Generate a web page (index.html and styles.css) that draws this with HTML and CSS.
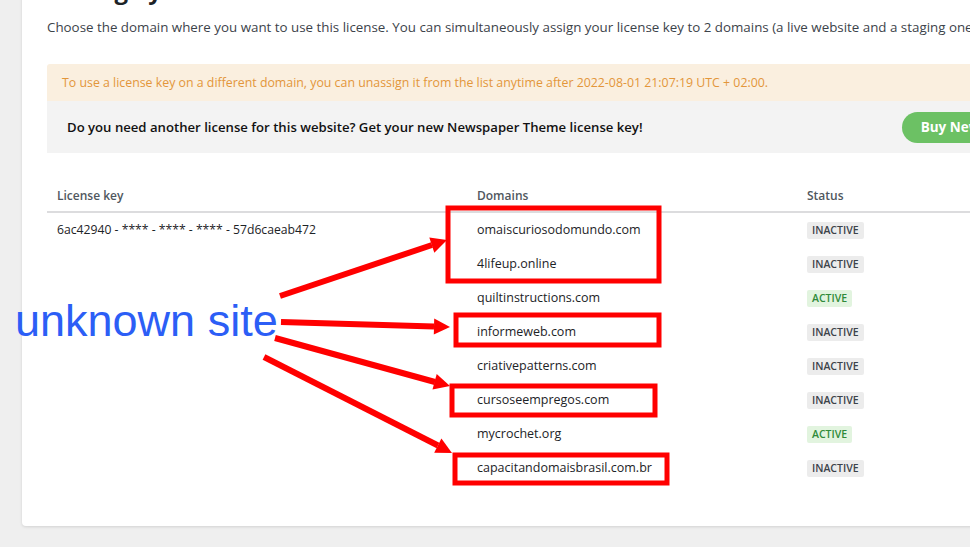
FILE: index.html
```html
<!DOCTYPE html>
<html>
<head>
<meta charset="utf-8">
<link rel="stylesheet" href="styles.css">
</head>
<body>
<div class="page">
  <div class="card">
    <h1 class="title">Manage your license</h1>
    <p class="intro">Choose the domain where you want to use this license. You can simultaneously assign your license key to 2 domains (a live website and a staging one).</p>
    <div class="notice">To use a license key on a different domain, you can unassign it from the list anytime after 2022-08-01 21:07:19 UTC + 02:00.</div>
    <div class="promo">
      <span class="promo-text">Do you need another license for this website? Get your new Newspaper Theme license key!</span>
      <a class="btn-buy">Buy New License</a>
    </div>
    <table class="licenses">
      <thead>
        <tr><th class="c-key">License key</th><th class="c-dom">Domains</th><th class="c-st">Status</th></tr>
      </thead>
      <tbody>
        <tr><td class="c-key" rowspan="8">6ac42940 - **** - **** - **** - 57d6caeab472</td><td>omaiscuriosodomundo.com</td><td><span class="badge">Inactive</span></td></tr>
        <tr><td>4lifeup.online</td><td><span class="badge">Inactive</span></td></tr>
        <tr><td>quiltinstructions.com</td><td><span class="badge active">Active</span></td></tr>
        <tr><td>informeweb.com</td><td><span class="badge">Inactive</span></td></tr>
        <tr><td>criativepatterns.com</td><td><span class="badge">Inactive</span></td></tr>
        <tr><td>cursoseempregos.com</td><td><span class="badge">Inactive</span></td></tr>
        <tr><td>mycrochet.org</td><td><span class="badge active">Active</span></td></tr>
        <tr><td>capacitandomaisbrasil.com.br</td><td><span class="badge">Inactive</span></td></tr>
      </tbody>
    </table>
  </div>
</div>
<svg class="annot" width="970" height="547" viewBox="0 0 970 547">
  <g fill="none" stroke="#ff0000" stroke-width="5">
    <rect x="448" y="208" width="211" height="73"/>
    <rect x="456" y="315" width="203" height="30"/>
    <rect x="452" y="386" width="203" height="29"/>
    <rect x="455" y="455" width="212" height="28"/>
  </g>
  <g stroke="#ff0000" stroke-width="6" stroke-linecap="butt">
    <line x1="280" y1="296" x2="432" y2="245"/>
    <line x1="281" y1="322" x2="434" y2="326.5"/>
    <line x1="275" y1="338" x2="435" y2="382"/>
    <line x1="264" y1="357" x2="438" y2="445.5"/>
  </g>
  <g fill="#ff0000">
    <polygon points="447,240 434.3,252.7 429.3,237.5"/>
    <polygon points="450,327 433.8,334.5 434.2,318.5"/>
    <polygon points="450,386 432.5,389.5 436.7,374.1"/>
    <polygon points="452,453 434.2,452.8 441.4,438.6"/>
  </g>
  <text class="annot-label" x="15" y="336">unknown site</text>
</svg>
</body>
</html>
```
FILE: styles.css
```css
html, body {
  margin: 0;
  padding: 0;
}
body {
  background: #efefef;
  width: 970px;
  height: 547px;
  overflow: hidden;
  position: relative;
  font-family: "Open Sans", "Noto Sans", sans-serif;
  color: #3c434a;
}
.page {
  padding-left: 22px;
}
.card {
  box-sizing: border-box;
  width: 1076px;
  height: 553px;
  margin-top: -27px;
  padding: 0 25px;
  background: #fff;
  border-radius: 4px;
  box-shadow: 0 1px 3px rgba(0,0,0,0.12);
}
.title {
  margin: 0;
  height: 34px;
  font-size: 24px;
  line-height: 34px;
  font-weight: 700;
  color: #1d2327;
}
.intro {
  margin: 10px 0 0;
  font-size: 13.35px;
  line-height: 20px;
  color: #3c434a;
  white-space: nowrap;
}
.notice {
  margin-top: 27px;
  height: 37px;
  line-height: 37px;
  padding: 0 15px;
  background: #faefdf;
  color: #e3963a;
  font-size: 12.35px;
  border-radius: 3px 3px 0 0;
  white-space: nowrap;
}
.promo {
  display: flex;
  align-items: center;
  height: 52px;
  padding: 0 20px;
  background: #f3f3f3;
}
.promo-text {
  font-size: 13.15px;
  font-weight: 600;
  color: #111;
  white-space: nowrap;
}
.btn-buy {
  margin-left: auto;
  height: 31px;
  line-height: 31px;
  padding: 0 19px;
  background: #6cc164;
  color: #fff;
  font-size: 13.5px;
  font-weight: 700;
  border-radius: 16px;
  white-space: nowrap;
}
.licenses {
  margin-top: 32px;
  width: 100%;
  border-collapse: collapse;
  font-size: 12.5px;
}
.licenses th {
  text-align: left;
  font-weight: 600;
  font-size: 12px;
  color: #50575e;
  height: 24px;
  vertical-align: top;
  padding: 2px 10px 0;
  border-bottom: 2px solid #dcdcde;
  line-height: 18px;
}
.licenses td {
  height: 34px;
  padding: 0 10px;
  vertical-align: middle;
  color: #1d2327;
  line-height: 18px;
}
.licenses td.c-key {
  vertical-align: top;
  padding-top: 8px;
  font-size: 12.2px;
}
.c-key { width: 400px; }
.c-dom { width: 310px; }
.badge {
  display: inline-block;
  height: 17px;
  line-height: 17px;
  padding: 0 5px;
  background: #ececec;
  color: #3c434a;
  font-size: 10.5px;
  font-weight: 600;
  text-transform: uppercase;
  border-radius: 2px;
}
.badge.active {
  background: #e2f4df;
  color: #2f8a3a;
}
.annot {
  position: absolute;
  left: 0;
  top: 0;
  pointer-events: none;
}
.annot-label {
  font-family: "Liberation Sans", Arial, sans-serif;
  font-size: 45px;
  fill: #2c5ef6;
}
```
